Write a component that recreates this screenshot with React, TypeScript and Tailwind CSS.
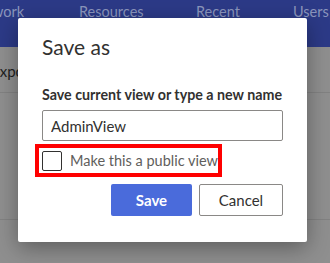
import React from "react";

const font = { fontFamily: '"Segoe UI", Lato, "Noto Sans", sans-serif' };

function BackgroundPage() {
  return (
    <div className="flex h-full w-full flex-col bg-[#8f8f8f]">
      <nav className="flex h-[47px] shrink-0 items-start bg-[#2c3a87] pt-[2px] text-[14.5px] leading-[20px] text-[#8b96bd]">
        <span className="ml-[-8px] w-[87px]">work</span>
        <span className="w-[117px]">Resources</span>
        <span className="w-[97px]">Recent</span>
        <span>Users</span>
      </nav>
      <div className="h-[46px] border-b border-[#828282] pt-[13px] text-[15px] text-[#1f1f1f]">
        <span className="ml-[-9px]">Expo</span>
      </div>
      <div className="h-[127px] border-b border-[#828282]" />
    </div>
  );
}

function SaveAsDialog() {
  return (
    <div className="absolute left-[18px] top-[18px] flex w-[289px] flex-col rounded-[2px] bg-white px-6 pb-[26px] pt-[15px] shadow-[0_6px_22px_rgba(0,0,0,0.35)]">
      <h2 className="text-[21px] leading-[28px] text-[#323130]">Save as</h2>
      <label
        htmlFor="view-name"
        className="mt-[24px] whitespace-nowrap text-[14.25px] font-bold leading-[20px] text-[#323130]"
      >
        Save current view or type a new name
      </label>
      <input
        id="view-name"
        type="text"
        defaultValue="AdminView"
        className="mt-[5px] h-[31px] w-full rounded-[2px] border border-[#8a8886] px-[8px] text-[15px] text-[#323130] outline-none"
      />
      <div className="ml-[-7px] mt-[3px] flex h-[33px] w-[187px] items-center border-4 border-[#ff0000] pl-[3px]">
        <span className="h-[20px] w-[20px] shrink-0 rounded-[2px] border border-[#323130]" />
        <span className="ml-[8px] whitespace-nowrap text-[14.5px] leading-[20px] text-[#605e5c]">
          Make this a public view
        </span>
      </div>
      <div className="mt-[7px] flex justify-end gap-[7px]">
        <button
          type="button"
          className="h-[32px] w-[81px] rounded-[2px] bg-[#4a6bdb] text-[15px] font-bold text-white"
        >
          Save
        </button>
        <button
          type="button"
          className="h-[32px] w-[84px] rounded-[2px] border border-[#8a8886] bg-white text-[15px] text-[#323130]"
        >
          Cancel
        </button>
      </div>
    </div>
  );
}

export default function App() {
  return (
    <div className="relative h-[263px] w-[330px] overflow-hidden" style={font}>
      <BackgroundPage />
      <SaveAsDialog />
    </div>
  );
}
